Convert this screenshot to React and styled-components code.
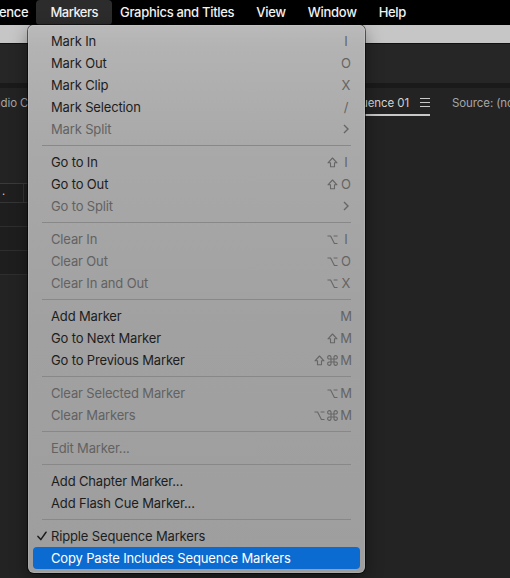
import React from "react";
import styled, { createGlobalStyle } from "styled-components";

const Global = createGlobalStyle`
  html, body { margin: 0; padding: 0; background: #1f1f1f; }
  body { font-family: "Inter", "DejaVu Sans", sans-serif; }
  * { box-sizing: border-box; }
`;

const Screen = styled.div`
  position: relative;
  width: 510px;
  height: 578px;
  overflow: hidden;
  background: #222222;
  display: flex;
  flex-direction: column;
`;

const MenuBar = styled.div`
  height: 25px;
  flex: none;
  background: #000;
  display: flex;
  align-items: stretch;
`;

const BarItem = styled.div`
  display: flex;
  align-items: center;
  padding: 0 14px 1px;
  margin: 0 -3px;
  color: #f2f2f2;
  font-size: 13px;
  font-weight: 500;
  letter-spacing: ${(p) => (p.$active ? "-0.5px" : "-0.3px")};
  white-space: nowrap;
  border-radius: 4px;
  background: ${(p) => (p.$active ? "#2c2c2c" : "transparent")};
  &:first-child {
    padding-left: 0;
    padding-right: 14px;
    margin-left: -1px;
  }
`;

const TitleStrip = styled.div`
  height: 19px;
  flex: none;
  background: #c6c6c6;
  border-bottom: 1px solid #111;
`;

const Toolbar = styled.div`
  height: 39px;
  flex: none;
  background: #262626;
`;

const Band = styled.div`
  height: 5px;
  flex: none;
  background: #1a1a1a;
`;

const Panel = styled.div`
  flex: 1;
  background: #232323;
  display: flex;
  flex-direction: column;
`;

const TabRow = styled.div`
  height: 25px;
  margin-top: 3px;
  display: flex;
  align-items: stretch;
`;

const TabGroup = styled.div`
  width: 430px;
  flex: none;
  display: flex;
  justify-content: space-between;
  overflow: hidden;
`;

const Tab = styled.div`
  display: flex;
  align-items: center;
  gap: 11px;
  font-size: 11.5px;
  letter-spacing: -0.1px;
  white-space: nowrap;
  color: ${(p) => (p.$active ? "#d2d2d2" : "#a6a6a6")};
  border-bottom: 2px solid ${(p) => (p.$active ? "#c8c8c8" : "transparent")};
  margin-left: ${(p) => p.$offset || 0}px;
`;

const SourceTab = styled(Tab)`
  margin-left: 22px;
`;

const Hamburger = styled.span`
  display: inline-flex;
  flex-direction: column;
  gap: 3px;
  width: 10px;
  & > i {
    display: block;
    height: 1.2px;
    background: #c8c8c8;
  }
`;

const Table = styled.div`
  margin-top: 67px;
  width: 80px;
  display: flex;
  flex-direction: column;
`;

const HeaderRow = styled.div`
  height: 20px;
  border-top: 1px solid #3a3a3a;
  border-bottom: 1px solid #353535;
  display: flex;
  align-items: center;
  color: #cfcfcf;
  font-size: 11px;
  background: #1f1f1f;
  & > span {
    width: 24px;
    height: 100%;
    border-right: 1px solid #333;
    padding-left: 2px;
    line-height: 14px;
  }
`;

const TableRow = styled.div`
  height: 24px;
  border-bottom: 1px solid #2e2e2e;
  background: #1e1e1e;
`;

/* ---------- dropdown ---------- */

const Dropdown = styled.div`
  position: absolute;
  left: 28px;
  top: 25px;
  width: 337px;
  padding: 5px 5px 4px;
  border-radius: 6px;
  background: linear-gradient(
    180deg,
    #bababa 0px,
    #b3b3b3 22px,
    #a9a9a9 120px,
    #a1a1a1 300px,
    #9e9e9e 100%
  );
  box-shadow: 0 0 0 1px rgba(0, 0, 0, 0.55), inset 0 0 0 1px rgba(255, 255, 255, 0.12),
    0 6px 18px rgba(0, 0, 0, 0.4);
  display: flex;
  flex-direction: column;
`;

const Item = styled.div`
  position: relative;
  height: 22px;
  display: flex;
  align-items: center;
  padding: 0 8px 0 18px;
  border-radius: 4px;
  font-size: 13px;
  letter-spacing: -0.15px;
  white-space: nowrap;
  color: ${(p) => (p.$hl ? "#ffffff" : p.$disabled ? "#626262" : "#1d1d1d")};
  background: ${(p) => (p.$hl ? "#0b6bd1" : "transparent")};
`;

const Label = styled.span`
  flex: 1;
`;

const Check = styled.svg`
  position: absolute;
  left: 4px;
  top: 6px;
`;

const Shortcut = styled.span`
  display: flex;
  align-items: center;
  gap: 2px;
  color: #646464;
  font-size: 13px;
`;

const Mod = styled.svg`
  display: block;
  flex: none;
`;

const Key = styled.span`
  width: 12px;
  display: flex;
  justify-content: center;
  letter-spacing: 0;
`;

const Sep = styled.div`
  height: 11px;
  display: flex;
  align-items: center;
  padding: 0 9px;
  &::after {
    content: "";
    flex: 1;
    height: 1px;
    background: #888888;
  }
`;

const stroke = { fill: "none", stroke: "#666", strokeWidth: 1.1, strokeLinejoin: "round" };

const Shift = () => (
  <Mod width="11" height="11" viewBox="0 0 11 11">
    <path d="M5.5 1 L10 5.8 L7.5 5.8 L7.5 9.8 L3.5 9.8 L3.5 5.8 L1 5.8 Z" {...stroke} />
  </Mod>
);

const Option = () => (
  <Mod width="11" height="11" viewBox="0 0 11 11">
    <path d="M0.5 2 H3.6 L7.4 9.5 H10.5 M6.6 2 H10.5" {...stroke} />
  </Mod>
);

const Cmd = () => (
  <Mod width="11" height="11" viewBox="0 0 11 11">
    <path
      d="M4 4 V2.7 A1.7 1.7 0 1 0 2.7 4 H8.3 A1.7 1.7 0 1 0 7 2.7 V8.3 A1.7 1.7 0 1 0 8.3 7 H2.7 A1.7 1.7 0 1 0 4 8.3 Z"
      {...stroke}
    />
  </Mod>
);

const modIcons = { s: Shift, o: Option, c: Cmd };

const Chevron = () => (
  <svg width="6" height="10" viewBox="0 0 6 10">
    <path d="M1 1 L5 5 L1 9" fill="none" stroke="#666" strokeWidth="1.4" />
  </svg>
);

const menu = [
  { l: "Mark In", k: "I" },
  { l: "Mark Out", k: "O" },
  { l: "Mark Clip", k: "X" },
  { l: "Mark Selection", k: "/" },
  { l: "Mark Split", d: true, sub: true },
  "sep",
  { l: "Go to In", m: "s", k: "I" },
  { l: "Go to Out", m: "s", k: "O" },
  { l: "Go to Split", d: true, sub: true },
  "sep",
  { l: "Clear In", d: true, m: "o", k: "I" },
  { l: "Clear Out", d: true, m: "o", k: "O" },
  { l: "Clear In and Out", d: true, m: "o", k: "X" },
  "sep",
  { l: "Add Marker", k: "M" },
  { l: "Go to Next Marker", m: "s", k: "M" },
  { l: "Go to Previous Marker", m: "sc", k: "M" },
  "sep",
  { l: "Clear Selected Marker", d: true, m: "o", k: "M" },
  { l: "Clear Markers", d: true, m: "oc", k: "M" },
  "sep",
  { l: "Edit Marker...", d: true },
  "sep",
  { l: "Add Chapter Marker..." },
  { l: "Add Flash Cue Marker..." },
  "sep",
  { l: "Ripple Sequence Markers", c: true },
  { l: "Copy Paste Includes Sequence Markers", hl: true },
];

export default function App() {
  return (
    <>
      <Global />
      <Screen>
        <MenuBar>
          <BarItem>ence</BarItem>
          <BarItem $active>Markers</BarItem>
          <BarItem>Graphics and Titles</BarItem>
          <BarItem>View</BarItem>
          <BarItem>Window</BarItem>
          <BarItem>Help</BarItem>
        </MenuBar>
        <TitleStrip />
        <Toolbar />
        <Band />
        <Panel>
          <TabRow>
            <TabGroup>
              <Tab $offset={-14}>Audio Clip Mixer</Tab>
              <Tab $active>
                Sequence 01
                <Hamburger>
                  <i />
                  <i />
                  <i />
                </Hamburger>
              </Tab>
            </TabGroup>
            <SourceTab>Source: (no clips)</SourceTab>
          </TabRow>
          <Table>
            <HeaderRow>
              <span>.</span>
            </HeaderRow>
            <TableRow />
            <TableRow />
            <TableRow />
          </Table>
        </Panel>

        <Dropdown>
          {menu.map((it, i) =>
            it === "sep" ? (
              <Sep key={i} />
            ) : (
              <Item key={i} $disabled={it.d} $hl={it.hl}>
                {it.c && (
                  <Check width="10" height="10" viewBox="0 0 10 10">
                    <path
                      d="M1 5.4 L3.8 8.6 L9 1.2"
                      fill="none"
                      stroke="#1d1d1d"
                      strokeWidth="1.5"
                      strokeLinecap="round"
                      strokeLinejoin="round"
                    />
                  </Check>
                )}
                <Label>{it.l}</Label>
                {(it.k || it.sub) && (
                  <Shortcut>
                    {it.m &&
                      it.m.split("").map((m, j) => {
                        const Icon = modIcons[m];
                        return <Icon key={j} />;
                      })}
                    <Key>{it.sub ? <Chevron /> : it.k}</Key>
                  </Shortcut>
                )}
              </Item>
            )
          )}
        </Dropdown>
      </Screen>
    </>
  );
}
